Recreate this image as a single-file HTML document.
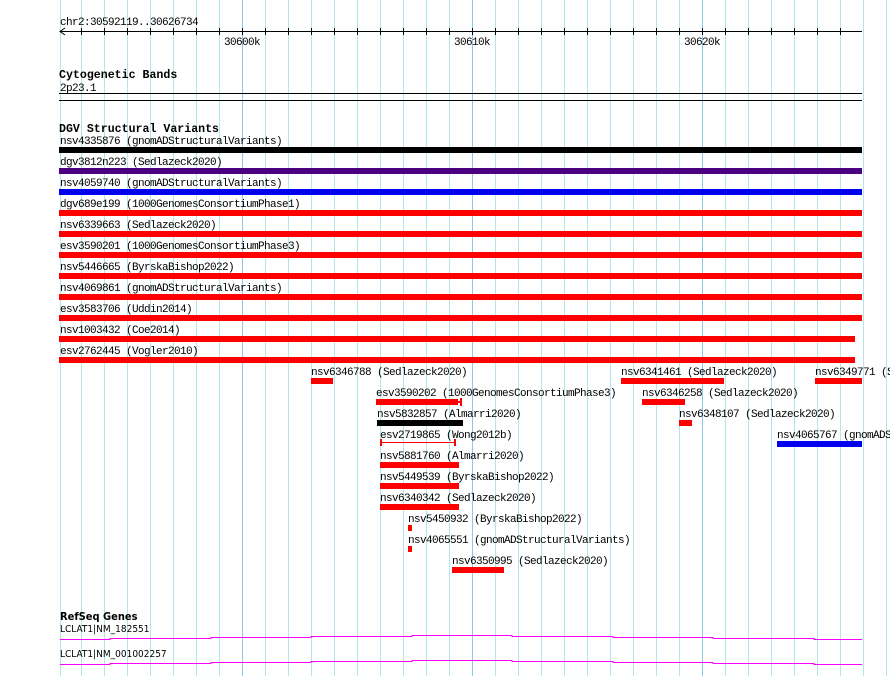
<!DOCTYPE html>
<html><head><meta charset="utf-8"><style>
html,body{margin:0;padding:0;background:#fff;width:890px;height:676px;overflow:hidden}
svg{display:block}
text{font-family:"Liberation Mono","DejaVu Sans Mono",monospace;font-size:11px;letter-spacing:-0.6px;fill:#000}
.b{font-weight:bold;font-size:11.6px;letter-spacing:0}
.s{font-family:"DejaVu Sans Condensed","Liberation Sans Narrow","Liberation Sans",sans-serif;font-size:10px;letter-spacing:0}
</style></head><body>
<svg width="890" height="676" xmlns="http://www.w3.org/2000/svg">
<g id="grid" stroke="#b0e6ee" stroke-width="1">
<line x1="60.5" y1="0" x2="60.5" y2="676"/>
<line x1="81.5" y1="0" x2="81.5" y2="676"/><line x1="104.5" y1="0" x2="104.5" y2="676"/><line x1="127.5" y1="0" x2="127.5" y2="676"/><line x1="150.5" y1="0" x2="150.5" y2="676"/><line x1="173.5" y1="0" x2="173.5" y2="676"/><line x1="196.5" y1="0" x2="196.5" y2="676"/><line x1="219.5" y1="0" x2="219.5" y2="676"/>
<line x1="242.5" y1="0" x2="242.5" y2="676" stroke="#8cc8ee"/>
<line x1="265.5" y1="0" x2="265.5" y2="676"/><line x1="288.5" y1="0" x2="288.5" y2="676"/><line x1="311.5" y1="0" x2="311.5" y2="676"/><line x1="334.5" y1="0" x2="334.5" y2="676"/><line x1="357.5" y1="0" x2="357.5" y2="676"/><line x1="380.5" y1="0" x2="380.5" y2="676"/><line x1="403.5" y1="0" x2="403.5" y2="676"/><line x1="426.5" y1="0" x2="426.5" y2="676"/><line x1="449.5" y1="0" x2="449.5" y2="676"/>
<line x1="472.5" y1="0" x2="472.5" y2="676" stroke="#8cc8ee"/>
<line x1="495.5" y1="0" x2="495.5" y2="676"/><line x1="518.5" y1="0" x2="518.5" y2="676"/><line x1="541.5" y1="0" x2="541.5" y2="676"/><line x1="564.5" y1="0" x2="564.5" y2="676"/><line x1="587.5" y1="0" x2="587.5" y2="676"/><line x1="610.5" y1="0" x2="610.5" y2="676"/><line x1="633.5" y1="0" x2="633.5" y2="676"/><line x1="656.5" y1="0" x2="656.5" y2="676"/><line x1="679.5" y1="0" x2="679.5" y2="676"/>
<line x1="702.5" y1="0" x2="702.5" y2="676" stroke="#8cc8ee"/>
<line x1="725.5" y1="0" x2="725.5" y2="676"/><line x1="748.5" y1="0" x2="748.5" y2="676"/><line x1="771.5" y1="0" x2="771.5" y2="676"/><line x1="794.5" y1="0" x2="794.5" y2="676"/><line x1="817.5" y1="0" x2="817.5" y2="676"/><line x1="840.5" y1="0" x2="840.5" y2="676"/><line x1="863.5" y1="0" x2="863.5" y2="676"/><line x1="886.5" y1="0" x2="886.5" y2="676"/>
</g>
<!-- ruler -->
<text x="60" y="25">chr2:30592119..30626734</text>
<line x1="60" y1="31.5" x2="862" y2="31.5" stroke="#000"/>
<path d="M65 28 L60 31.5 L65 35" fill="none" stroke="#000"/>
<g stroke="#000">
<line x1="81.5" y1="28" x2="81.5" y2="35"/><line x1="104.5" y1="28" x2="104.5" y2="35"/><line x1="127.5" y1="28" x2="127.5" y2="35"/><line x1="150.5" y1="28" x2="150.5" y2="35"/><line x1="173.5" y1="28" x2="173.5" y2="35"/><line x1="196.5" y1="28" x2="196.5" y2="35"/><line x1="219.5" y1="28" x2="219.5" y2="35"/><line x1="242.5" y1="28" x2="242.5" y2="35"/><line x1="265.5" y1="28" x2="265.5" y2="35"/><line x1="288.5" y1="28" x2="288.5" y2="35"/><line x1="311.5" y1="28" x2="311.5" y2="35"/><line x1="334.5" y1="28" x2="334.5" y2="35"/><line x1="357.5" y1="28" x2="357.5" y2="35"/><line x1="380.5" y1="28" x2="380.5" y2="35"/><line x1="403.5" y1="28" x2="403.5" y2="35"/><line x1="426.5" y1="28" x2="426.5" y2="35"/><line x1="449.5" y1="28" x2="449.5" y2="35"/><line x1="472.5" y1="28" x2="472.5" y2="35"/><line x1="495.5" y1="28" x2="495.5" y2="35"/><line x1="518.5" y1="28" x2="518.5" y2="35"/><line x1="541.5" y1="28" x2="541.5" y2="35"/><line x1="564.5" y1="28" x2="564.5" y2="35"/><line x1="587.5" y1="28" x2="587.5" y2="35"/><line x1="610.5" y1="28" x2="610.5" y2="35"/><line x1="633.5" y1="28" x2="633.5" y2="35"/><line x1="656.5" y1="28" x2="656.5" y2="35"/><line x1="679.5" y1="28" x2="679.5" y2="35"/><line x1="702.5" y1="28" x2="702.5" y2="35"/><line x1="725.5" y1="28" x2="725.5" y2="35"/><line x1="748.5" y1="28" x2="748.5" y2="35"/><line x1="771.5" y1="28" x2="771.5" y2="35"/><line x1="794.5" y1="28" x2="794.5" y2="35"/><line x1="817.5" y1="28" x2="817.5" y2="35"/><line x1="840.5" y1="28" x2="840.5" y2="35"/>
</g>
<text x="224" y="45">30600k</text>
<text x="454" y="45">30610k</text>
<text x="684" y="45">30620k</text>
<!-- cyto -->
<text class="b" x="59" y="78">Cytogenetic Bands</text>
<text x="60" y="91">2p23.1</text>
<line x1="59" y1="93.5" x2="862" y2="93.5" stroke="#000"/>
<line x1="59" y1="100.5" x2="862" y2="100.5" stroke="#000"/>
<!-- DGV -->
<text class="b" x="59" y="132">DGV Structural Variants</text>
<text x="60" y="144">nsv4335876 (gnomADStructuralVariants)</text><rect x="59" y="147" width="803" height="6" fill="#000"/>
<text x="60" y="165">dgv3812n223 (Sedlazeck2020)</text><rect x="59" y="168" width="803" height="6" fill="#4b0082"/>
<text x="60" y="186">nsv4059740 (gnomADStructuralVariants)</text><rect x="59" y="189" width="803" height="6" fill="#0000ee"/>
<text x="60" y="207">dgv689e199 (1000GenomesConsortiumPhase1)</text><rect x="59" y="210" width="803" height="6" fill="#f00"/>
<text x="60" y="228">nsv6339663 (Sedlazeck2020)</text><rect x="59" y="231" width="803" height="6" fill="#f00"/>
<text x="60" y="249">esv3590201 (1000GenomesConsortiumPhase3)</text><rect x="59" y="252" width="803" height="6" fill="#f00"/>
<text x="60" y="270">nsv5446665 (ByrskaBishop2022)</text><rect x="59" y="273" width="803" height="6" fill="#f00"/>
<text x="60" y="291">nsv4069861 (gnomADStructuralVariants)</text><rect x="59" y="294" width="803" height="6" fill="#f00"/>
<text x="60" y="312">esv3583706 (Uddin2014)</text><rect x="59" y="315" width="803" height="6" fill="#f00"/>
<text x="60" y="333">nsv1003432 (Coe2014)</text><rect x="59" y="336" width="796" height="6" fill="#f00"/>
<text x="60" y="354">esv2762445 (Vogler2010)</text><rect x="59" y="357" width="796" height="6" fill="#f00"/>
<text x="311" y="375">nsv6346788 (Sedlazeck2020)</text><rect x="311" y="378" width="22" height="6" fill="#f00"/>
<text x="621" y="375">nsv6341461 (Sedlazeck2020)</text><rect x="621" y="378" width="103" height="6" fill="#f00"/>
<text x="815" y="375">nsv6349771 (Sedlazeck2020)</text><rect x="815" y="378" width="47" height="6" fill="#f00"/>
<text x="376" y="396">esv3590202 (1000GenomesConsortiumPhase3)</text><rect x="376" y="399" width="82" height="6" fill="#f00"/><rect x="458" y="401" width="3" height="2" fill="#f00"/><rect x="460" y="398" width="2" height="8" fill="#f00"/>
<text x="642" y="396">nsv6346258 (Sedlazeck2020)</text><rect x="642" y="399" width="43" height="6" fill="#f00"/>
<text x="377" y="417">nsv5832857 (Almarri2020)</text><rect x="377" y="420" width="86" height="6" fill="#000"/>
<text x="679" y="417">nsv6348107 (Sedlazeck2020)</text><rect x="679" y="420" width="13" height="6" fill="#f00"/>
<text x="380" y="438">esv2719865 (Wong2012b)</text><rect x="380" y="439" width="2" height="7" fill="#f00"/><rect x="380" y="442" width="75" height="1" fill="#f00"/><rect x="454" y="439" width="2" height="7" fill="#f00"/>
<text x="777" y="438">nsv4065767 (gnomADStructuralVariants)</text><rect x="777" y="441" width="85" height="6" fill="#0000ee"/>
<text x="380" y="459">nsv5881760 (Almarri2020)</text><rect x="380" y="462" width="79" height="6" fill="#f00"/>
<text x="380" y="480">nsv5449539 (ByrskaBishop2022)</text><rect x="380" y="483" width="79" height="6" fill="#f00"/>
<text x="380" y="501">nsv6340342 (Sedlazeck2020)</text><rect x="380" y="504" width="79" height="6" fill="#f00"/>
<text x="408" y="522">nsv5450932 (ByrskaBishop2022)</text><rect x="408" y="525" width="4" height="6" fill="#f00"/>
<text x="408" y="543">nsv4065551 (gnomADStructuralVariants)</text><rect x="408" y="546" width="4" height="6" fill="#f00"/>
<text x="452" y="564">nsv6350995 (Sedlazeck2020)</text><rect x="452" y="567" width="52" height="6" fill="#f00"/>
<!-- RefSeq -->
<text class="s" x="60" y="620" style="font-weight:bold;font-size:11px">RefSeq Genes</text>
<text class="s" x="60" y="632">LCLAT1|NM_182551</text>
<path d="M60 639.5H110V638.5H211V637.5H311V636.5H412V635.5H512V636.5H613V637.5H713V638.5H814V639.5H862" fill="none" stroke="#f0f" stroke-width="1"/>
<text class="s" x="60" y="657">LCLAT1|NM_001002257</text>
<path d="M60 664.5H110V663.5H211V662.5H311V661.5H412V660.5H512V661.5H613V662.5H713V663.5H814V664.5H862" fill="none" stroke="#f0f" stroke-width="1"/>
</svg>
</body></html>
